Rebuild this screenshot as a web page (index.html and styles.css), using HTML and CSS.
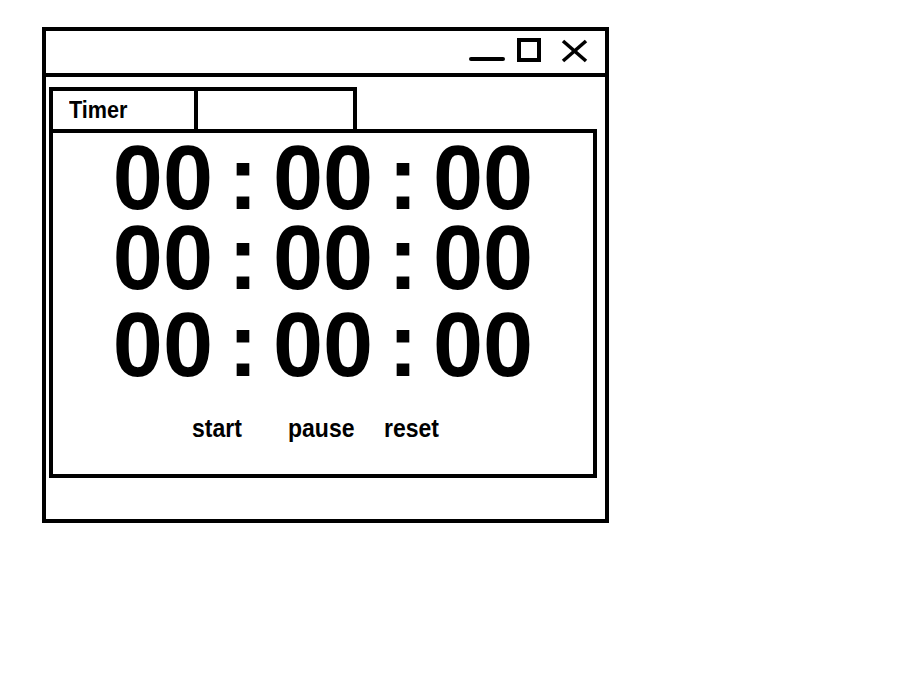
FILE: index.html
```html
<!DOCTYPE html>
<html>
<head>
<meta charset="utf-8">
<link rel="stylesheet" href="styles.css">
</head>
<body>
<div class="window">
  <div class="titlebar">
    <svg class="controls" width="120" height="42" viewBox="0 0 120 42">
      <line x1="2" y1="28" x2="34" y2="28" stroke="#000" stroke-width="4" stroke-linecap="round"/>
      <rect x="50" y="9" width="20" height="20" fill="none" stroke="#000" stroke-width="4"/>
      <line x1="94" y1="10" x2="117" y2="30" stroke="#000" stroke-width="3.6"/>
      <line x1="117" y1="10" x2="94" y2="30" stroke="#000" stroke-width="3.6"/>
    </svg>
  </div>
  <div class="body">
    <div class="tabs">
      <div class="tab tab-first"><span class="tab-label">Timer</span></div>
      <div class="tab tab-second"></div>
    </div>
    <div class="panel">
      <div class="clock">00 : 00 : 00</div>
      <div class="clock">00 : 00 : 00</div>
      <div class="clock clock-last">00 : 00 : 00</div>
      <div class="buttons">
        <span class="btn btn-start">start</span>
        <span class="btn btn-pause">pause</span>
        <span class="btn btn-reset">reset</span>
      </div>
    </div>
  </div>
</div>
</body>
</html>
```
FILE: styles.css
```css
html, body {
  margin: 0;
  padding: 0;
  background: #fff;
}
body {
  padding: 27px 0 0 42px;
  font-family: "Liberation Sans", Arial, sans-serif;
  color: #000;
}
.window {
  box-sizing: border-box;
  width: 567px;
  height: 496px;
  border: 4px solid #000;
  display: flex;
  flex-direction: column;
}
.titlebar {
  height: 42px;
  border-bottom: 4px solid #000;
  display: flex;
  justify-content: flex-end;
  flex-shrink: 0;
}
.controls {
  display: block;
  margin-right: 16px;
}
.body {
  padding: 10px 8px 0 3px;
  display: flex;
  flex-direction: column;
}
.tabs {
  display: flex;
  height: 42px;
}
.tab {
  box-sizing: border-box;
  height: 42px;
  border-top: 4px solid #000;
  border-right: 4px solid #000;
}
.tab-first {
  width: 149px;
  border-left: 4px solid #000;
  display: flex;
  align-items: center;
  padding-left: 16px;
}
.tab-second {
  width: 159px;
}
.tab-label {
  display: inline-block;
  font-weight: bold;
  font-size: 24px;
  transform: scaleX(0.9);
  transform-origin: left center;
}
.panel {
  box-sizing: border-box;
  height: 349px;
  border: 4px solid #000;
  display: flex;
  flex-direction: column;
  padding-top: 5px;
}
.clock {
  font-weight: bold;
  font-size: 90px;
  line-height: 80px;
  height: 80px;
  text-align: center;
  word-spacing: -10px;
  white-space: nowrap;
}
.clock-last {
  margin-top: 7px;
}
.buttons {
  margin-top: 28px;
  display: flex;
  padding-left: 139px;
  font-weight: bold;
  font-size: 25px;
  line-height: 30px;
}
.btn {
  display: inline-block;
  transform: scaleX(0.92);
  transform-origin: left center;
}
.btn-start { width: 96px; }
.btn-pause { width: 96px; }
.btn-reset { width: 60px; }
```
